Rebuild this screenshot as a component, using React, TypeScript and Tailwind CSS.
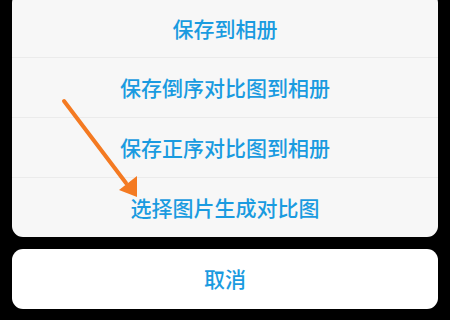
const items = ["保存到相册", "保存倒序对比图到相册", "保存正序对比图到相册", "选择图片生成对比图"]

export default function App() {
  return (
    <div
      className="relative w-[450px] h-[320px] overflow-hidden bg-black"
      style={{ fontFamily: '"Noto Sans CJK SC", "Noto Sans", sans-serif' }}
    >
      <div className="flex flex-col gap-3 px-3 -mt-[8px]">
        <div className="rounded-[11px] bg-[#f7f7f7] overflow-hidden">
          {items.map((text, i) => (
            <div
              key={text}
              className={`flex items-center justify-center text-[21px] font-medium text-[#1a9be0] ${
                i === 0 ? "h-[65px] pt-[8px]" : "h-[60px] border-t border-[#ebebeb]"
              }`}
            >
              {text}
            </div>
          ))}
        </div>
        <div className="h-[60px] rounded-[11px] bg-white flex items-center justify-center text-[21px] font-medium text-[#1a9be0]">
          取消
        </div>
      </div>

      {/* orange arrow annotation */}
      <svg className="absolute left-0 top-0" width="450" height="320" viewBox="0 0 450 320">
        <line x1="64" y1="101" x2="126" y2="183" stroke="#f47a22" strokeWidth="4" strokeLinecap="round" />
        <polygon points="119,190 137,176 137,197" fill="#f47a22" />
      </svg>
    </div>
  )
}
